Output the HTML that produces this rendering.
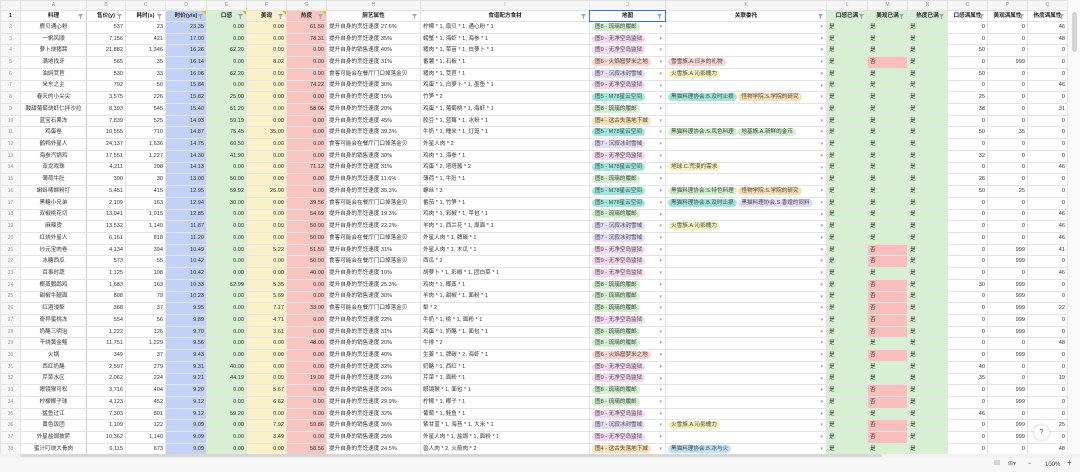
<!DOCTYPE html><html><head><meta charset="utf-8"><style>
*{margin:0;padding:0;box-sizing:border-box}
body{width:1080px;height:472px;overflow:hidden;background:#fff;font-family:"Liberation Sans","Noto Sans CJK SC",sans-serif;font-size:5.6px;color:#333;position:relative}
table{border-collapse:collapse;table-layout:fixed;position:absolute;left:0;top:0;width:1067px}
td{border:1px solid #e4e4e4;height:11.72px;padding:0 2px;white-space:nowrap;overflow:hidden;text-align:right;line-height:9px;position:relative}
tr.h td{height:10px;background:#f5f5f5;color:#999;text-align:center;font-size:5px;border-color:#e2e2e2}
tr.f td{height:11px;font-weight:bold;text-align:center;color:#222}
td:nth-child(1){background:#f7f7f7;color:#999;text-align:center;font-size:5px}
td:nth-child(2){text-align:center;border-right:1px solid #ccc}
td:nth-child(9),td:nth-child(10),td:nth-child(11),td:nth-child(12),td:nth-child(13),td:nth-child(14),td:nth-child(15){text-align:left}
td:nth-child(5){background:#c3d1f7}td:nth-child(6){background:#d7f0d2}td:nth-child(7){background:#fbf1c8}td:nth-child(8){background:#f8c5c1}
td:nth-child(13),td:nth-child(14),td:nth-child(15){background:#d7f0d2}
td.n{background:#f8bfbd!important}
tr.h td:nth-child(n){background:#f5f5f5}
tr.f td:nth-child(n+5):nth-child(-n+8)::before{content:"";position:absolute;right:0;top:0;border-top:4px solid #f2c200;border-left:4px solid transparent}
.fi{position:absolute;right:3px;top:3px;width:5px;height:5px;background:#9aa6c8;clip-path:polygon(0 0,100% 0,62% 50%,62% 100%,38% 100%,38% 50%)}
span{display:inline-block;border-radius:4px;padding:0 3px;line-height:8px;color:#444}
.g{background:#d3f0d0}.p{background:#f6d8f2}.r{background:#fbd5d2}.l{background:#e6def8}.t{background:#9fe8e0}.o{background:#fbdfb5}.y{background:#f5f3c0}.b{background:#bfe3fb}
.dd::after{content:"▾";position:absolute;right:3px;top:1px;color:#999;font-size:5px}
#sel{position:absolute;left:589px;top:10px;width:77px;height:12px;border:1.5px solid #3b6fd8}
#vs{position:absolute;left:1067px;top:0;width:13px;height:454px;background:#fafafa;border-left:1px solid #e6e6e6}
#vs div{position:absolute;left:4px;top:12px;width:5px;height:40px;background:#d4d4d4;border-radius:3px}
#hs{position:absolute;left:0;top:454px;width:1080px;height:4px;background:#f2f2f2}
#hs div{position:absolute;left:20px;top:0;width:862px;height:3px;background:#d6d6d6;border-radius:2px}
#ft{position:absolute;left:0;top:458px;width:1080px;height:14px;background:#f7f7f7;color:#666;font-size:6px}
#help{position:absolute;left:1034px;top:425px;width:15px;height:15px;border-radius:50%;background:#fff;box-shadow:0 0 3px #bbb;text-align:center;line-height:15px;font-size:7px;color:#555}
</style></head><body>
<table>
<colgroup><col style="width:20px"><col style="width:66px"><col style="width:39px"><col style="width:40px"><col style="width:41px"><col style="width:40px"><col style="width:40px"><col style="width:40px"><col style="width:94px"><col style="width:169px"><col style="width:76px"><col style="width:161px"><col style="width:41px"><col style="width:40px"><col style="width:40px"><col style="width:40px"><col style="width:40px"><col style="width:40px"></colgroup>
<tr class="h"><td></td><td>A</td><td>B</td><td>C</td><td>D</td><td>E</td><td>F</td><td>G</td><td>H</td><td>I</td><td>J</td><td>K</td><td>L</td><td>M</td><td>N</td><td>O</td><td>P</td><td>Q</td></tr>
<tr class="f"><td>1</td><td>料理<i class="fi"></i></td><td>售价(y)<i class="fi"></i></td><td>耗时(s)<i class="fi"></i></td><td>时价(y/s)<i class="fi"></i></td><td>口感<i class="fi"></i></td><td>美观<i class="fi"></i></td><td>热度<i class="fi"></i></td><td>厨艺属性<i class="fi"></i></td><td>食谱配方食材<i class="fi"></i></td><td>地图<i class="fi"></i></td><td>关联委托<i class="fi"></i></td><td>口感已满<i class="fi"></i></td><td>美观已满<i class="fi"></i></td><td>热度已满<i class="fi"></i></td><td>口感满属性<i class="fi"></i></td><td>美观满属性<i class="fi"></i></td><td>热度满属性<i class="fi"></i></td></tr>
<tr><td>2</td><td>鹿贝通心粉</td><td>537</td><td>23</td><td>23.35</td><td>0.00</td><td>0.00</td><td>61.50</td><td>提升自身的烹饪速度 27.6%</td><td>柠檬 * 1, 扇贝 * 1, 通心粉 * 1</td><td class="dd"><span class="g">图8 - 琉璃的履邮</span></td><td class="dd"></td><td>是</td><td>是</td><td>是</td><td>0</td><td>0</td><td>46</td></tr>
<tr><td>3</td><td>一帆风顺</td><td>7,156</td><td>421</td><td>17.00</td><td>0.00</td><td>0.00</td><td>78.31</td><td>提升自身的烹饪速度 35%</td><td>螃蟹 * 1, 海虾 * 1, 海参 * 1</td><td class="dd"><span class="p">图9 - 无净空岛监狱</span></td><td class="dd"></td><td>是</td><td>是</td><td>是</td><td>0</td><td>0</td><td>48</td></tr>
<tr><td>4</td><td>萝卜烧猪蹄</td><td>21,882</td><td>1,346</td><td>16.26</td><td>62.20</td><td>0.00</td><td>0.00</td><td>提升自身的销售速度 40%</td><td>猪肉 * 1, 菜苗 * 1, 白萝卜 * 1</td><td class="dd"><span class="p">图9 - 无净空岛监狱</span></td><td class="dd"></td><td>是</td><td>是</td><td>是</td><td>50</td><td>0</td><td>0</td></tr>
<tr><td>5</td><td>满地找牙</td><td>565</td><td>35</td><td>16.14</td><td>0.00</td><td>8.02</td><td>0.00</td><td>提升自身的烹饪速度 31%</td><td>番薯 * 1, 石板 * 1</td><td class="dd"><span class="r">图6 - 火焰窟梦米之地</span></td><td class="dd"><span class="r">雪雪族.A.日乡的礼物</span></td><td>是</td><td class="n">否</td><td>是</td><td>0</td><td>999</td><td>0</td></tr>
<tr><td>6</td><td>油焖茭苣</td><td>530</td><td>33</td><td>16.06</td><td>62.20</td><td>0.00</td><td>0.00</td><td>食客可能会在餐厅门口掉落金贝</td><td>猪肉 * 1, 茭苣 * 1</td><td class="dd"><span class="l">图7 - 沉寂冰封雪域</span></td><td class="dd"><span class="y">火雪族.A.沁影魄力</span></td><td>是</td><td>是</td><td>是</td><td>50</td><td>0</td><td>0</td></tr>
<tr><td>7</td><td>米东之主</td><td>792</td><td>50</td><td>15.84</td><td>0.00</td><td>0.00</td><td>74.22</td><td>提升自身的烹饪速度 30%</td><td>鸡蛋 * 1, 白萝卜 * 1, 墨鱼 * 1</td><td class="dd"><span class="p">图9 - 无净空岛监狱</span></td><td class="dd"></td><td>是</td><td>是</td><td>是</td><td>0</td><td>0</td><td>46</td></tr>
<tr><td>8</td><td>春天的小尖尖</td><td>3,575</td><td>226</td><td>15.82</td><td>25.00</td><td>0.00</td><td>0.00</td><td>提升自身的烹饪速度 15%</td><td>竹笋 * 2</td><td class="dd"><span class="t">图5 - M78星云空间</span></td><td class="dd"><span class="t">黑猫料理协会.B.及时止损</span> <span class="o">怪物学院.S.学院的研究</span></td><td>是</td><td>是</td><td>是</td><td>25</td><td>0</td><td>0</td></tr>
<tr><td>9</td><td>酸甜葡萄烧虾仁拌沙拉</td><td>8,393</td><td>545</td><td>15.40</td><td>51.20</td><td>0.00</td><td>58.06</td><td>提升自身的烹饪速度 20%</td><td>鸡蛋 * 1, 葡萄桃 * 1, 海虾 * 1</td><td class="dd"><span class="g">图8 - 琉璃的履邮</span></td><td class="dd"></td><td>是</td><td>是</td><td>是</td><td>38</td><td>0</td><td>31</td></tr>
<tr><td>10</td><td>蓝宝石果冻</td><td>7,839</td><td>525</td><td>14.93</td><td>59.19</td><td>0.00</td><td>0.00</td><td>提升自身的烹饪速度 45%</td><td>胶豆 * 1, 蓝莓 * 1, 冰粉 * 1</td><td class="dd"><span class="o">图4 - 远古失落地下城</span></td><td class="dd"></td><td>是</td><td>是</td><td>是</td><td>0</td><td>0</td><td>0</td></tr>
<tr><td>11</td><td>鸡蛋卷</td><td>10,555</td><td>710</td><td>14.87</td><td>75.45</td><td>35.00</td><td>0.00</td><td>提升自身的烹饪速度 39.3%</td><td>牛奶 * 1, 糯米 * 1, 灯笼 * 1</td><td class="dd"><span class="t">图5 - M78星云空间</span></td><td class="dd"><span class="g">黑猫料理协会.S.风色料理</span> <span class="g">地基族.A.新鲜的金币</span></td><td>是</td><td>是</td><td>是</td><td>50</td><td>35</td><td>0</td></tr>
<tr><td>12</td><td>鹤鸭外星人</td><td>24,137</td><td>1,636</td><td>14.75</td><td>60.50</td><td>0.00</td><td>0.00</td><td>食客可能会在餐厅门口掉落金贝</td><td>外星人肉 * 2</td><td class="dd"><span class="l">图7 - 沉寂冰封雪域</span></td><td class="dd"></td><td>是</td><td>是</td><td>是</td><td>0</td><td>0</td><td>0</td></tr>
<tr><td>13</td><td>海参汽锅鸡</td><td>17,551</td><td>1,227</td><td>14.30</td><td>41.90</td><td>0.00</td><td>0.00</td><td>提升自身的销售速度 30%</td><td>鸡肉 * 1, 海参 * 1</td><td class="dd"><span class="p">图9 - 无净空岛监狱</span></td><td class="dd"></td><td>是</td><td>是</td><td>是</td><td>32</td><td>0</td><td>0</td></tr>
<tr><td>14</td><td>双龙戏珠</td><td>4,211</td><td>298</td><td>14.13</td><td>0.00</td><td>0.00</td><td>71.12</td><td>提升自身的烹饪速度 31%</td><td>鸡蛋 * 2, 塔塔酱 * 2</td><td class="dd"><span class="t">图5 - M78星云空间</span></td><td class="dd"><span class="y">地球.C.荒漠的需求</span></td><td>是</td><td>是</td><td>是</td><td>0</td><td>0</td><td>46</td></tr>
<tr><td>15</td><td>薄荷牛肚</td><td>390</td><td>30</td><td>13.00</td><td>50.00</td><td>0.00</td><td>0.00</td><td>提升自身的烹饪速度 11.6%</td><td>薄荷 * 1, 牛肚 * 1</td><td class="dd"><span class="g">图8 - 琉璃的履邮</span></td><td class="dd"></td><td>是</td><td>是</td><td>是</td><td>26</td><td>0</td><td>0</td></tr>
<tr><td>16</td><td>蝌蚪嗦蛳粉打</td><td>5,451</td><td>415</td><td>12.95</td><td>59.92</td><td>25.00</td><td>0.00</td><td>提升自身的烹饪速度 35.3%</td><td>螺丝 * 3</td><td class="dd"><span class="t">图5 - M78星云空间</span></td><td class="dd"><span class="g">黑猫料理协会.S.特色料理</span> <span class="o">怪物学院.S.学院的研究</span></td><td>是</td><td>是</td><td>是</td><td>50</td><td>25</td><td>0</td></tr>
<tr><td>17</td><td>黑糖小兄弟</td><td>2,109</td><td>163</td><td>12.94</td><td>30.00</td><td>0.00</td><td>39.56</td><td>食客可能会在餐厅门口掉落金贝</td><td>番茄 * 1, 竹笋 * 1</td><td class="dd"><span class="t">图5 - M78星云空间</span></td><td class="dd"><span class="t">黑猫料理协会.B.及时止损</span> <span class="l">黑猫料理协会.S.香煌的同料</span></td><td>是</td><td>是</td><td>是</td><td>0</td><td>0</td><td>0</td></tr>
<tr><td>18</td><td>双椒桃花切</td><td>13,041</td><td>1,015</td><td>12.85</td><td>0.00</td><td>0.00</td><td>54.69</td><td>提升自身的烹饪速度 19.3%</td><td>鸡肉 * 1, 彩椒 * 1, 苹包 * 1</td><td class="dd"><span class="g">图8 - 琉璃的履邮</span></td><td class="dd"></td><td>是</td><td>是</td><td>是</td><td>0</td><td>0</td><td>46</td></tr>
<tr><td>19</td><td>麻辣烫</td><td>13,532</td><td>1,140</td><td>11.87</td><td>0.00</td><td>0.00</td><td>50.00</td><td>提升自身的烹饪速度 22.2%</td><td>羊肉 * 1, 西兰花 * 1, 周面 * 1</td><td class="dd"><span class="l">图7 - 沉寂冰封雪域</span></td><td class="dd"><span class="y">火雪族.A.沁影魄力</span></td><td>是</td><td>是</td><td>是</td><td>0</td><td>0</td><td>46</td></tr>
<tr><td>20</td><td>红烧外星人</td><td>6,161</td><td>818</td><td>11.20</td><td>0.00</td><td>0.00</td><td>50.00</td><td>食客可能会在餐厅门口掉落金贝</td><td>外星人肉 * 1, 牌碳 * 1</td><td class="dd"><span class="l">图7 - 沉寂冰封雪域</span></td><td class="dd"></td><td>是</td><td>是</td><td>是</td><td>0</td><td>0</td><td>46</td></tr>
<tr><td>21</td><td>炒元宝肉卷</td><td>4,134</td><td>394</td><td>10.49</td><td>0.00</td><td>5.22</td><td>51.50</td><td>提升自身的烹饪速度 31%</td><td>外星人肉 * 1, 木瓜 * 1</td><td class="dd"><span class="p">图9 - 无净空岛监狱</span></td><td class="dd"></td><td>是</td><td class="n">否</td><td>是</td><td>0</td><td>999</td><td>41</td></tr>
<tr><td>22</td><td>冰糖西瓜</td><td>573</td><td>55</td><td>10.42</td><td>0.00</td><td>0.00</td><td>50.00</td><td>食客可能会在餐厅门口掉落金贝</td><td>西瓜 * 2</td><td class="dd"><span class="p">图9 - 无净空岛监狱</span></td><td class="dd"></td><td>是</td><td class="n">否</td><td>是</td><td>0</td><td>999</td><td>0</td></tr>
<tr><td>23</td><td>百事时蔬</td><td>1,125</td><td>108</td><td>10.42</td><td>0.00</td><td>0.00</td><td>40.00</td><td>提升自身的烹饪速度 10%</td><td>胡萝卜 * 1, 彩椒 * 1, 团白菜 * 1</td><td class="dd"><span class="p">图9 - 无净空岛监狱</span></td><td class="dd"></td><td>是</td><td>是</td><td>是</td><td>0</td><td>0</td><td>46</td></tr>
<tr><td>24</td><td>椰蒸鹦鹉鸡</td><td>1,683</td><td>163</td><td>10.33</td><td>52.99</td><td>5.35</td><td>0.00</td><td>提升自身的烹饪速度 25.3%</td><td>鸡肉 * 1, 椰蒸 * 1</td><td class="dd"><span class="g">图8 - 琉璃的履邮</span></td><td class="dd"></td><td>是</td><td class="n">否</td><td>是</td><td>30</td><td>999</td><td>0</td></tr>
<tr><td>25</td><td>甜椒牛腿面</td><td>808</td><td>79</td><td>10.23</td><td>0.00</td><td>5.69</td><td>0.00</td><td>提升自身的销售速度 30%</td><td>羊肉 * 1, 甜椒 * 1, 面粉 * 1</td><td class="dd"><span class="g">图8 - 琉璃的履邮</span></td><td class="dd"></td><td>是</td><td class="n">否</td><td>是</td><td>0</td><td>999</td><td>0</td></tr>
<tr><td>26</td><td>红酒浸梨</td><td>368</td><td>37</td><td>9.95</td><td>0.00</td><td>7.17</td><td>33.00</td><td>食客可能会在餐厅门口掉落金贝</td><td>梨 * 2</td><td class="dd"><span class="g">图8 - 琉璃的履邮</span></td><td class="dd"></td><td>是</td><td class="n">否</td><td>是</td><td>0</td><td>999</td><td>22</td></tr>
<tr><td>27</td><td>奇异蜜桃冻</td><td>554</td><td>56</td><td>9.89</td><td>0.00</td><td>4.71</td><td>0.00</td><td>提升自身的烹饪速度 22%</td><td>牛奶 * 1, 桃 * 1, 面粉 * 1</td><td class="dd"><span class="p">图9 - 无净空岛监狱</span></td><td class="dd"></td><td>是</td><td class="n">否</td><td>是</td><td>0</td><td>999</td><td>0</td></tr>
<tr><td>28</td><td>奶酪三明治</td><td>1,222</td><td>126</td><td>9.70</td><td>0.00</td><td>3.61</td><td>0.00</td><td>提升自身的烹饪速度 31%</td><td>鸡蛋 * 1, 奶酪 * 1, 面包 * 1</td><td class="dd"><span class="g">图8 - 琉璃的履邮</span></td><td class="dd"></td><td>是</td><td class="n">否</td><td>是</td><td>0</td><td>999</td><td>0</td></tr>
<tr><td>29</td><td>干烧黄金鳐</td><td>11,751</td><td>1,229</td><td>9.56</td><td>0.00</td><td>0.00</td><td>48.00</td><td>提升自身的销售速度 20%</td><td>牛排 * 2</td><td class="dd"><span class="g">图8 - 琉璃的履邮</span></td><td class="dd"></td><td>是</td><td>是</td><td>是</td><td>0</td><td>0</td><td>48</td></tr>
<tr><td>30</td><td>火锅</td><td>349</td><td>37</td><td>9.43</td><td>0.00</td><td>0.00</td><td>0.00</td><td>提升自身的烹饪速度 40%</td><td>生姜 * 1, 牌碳 * 2, 海虾 * 1</td><td class="dd"><span class="r">图6 - 火焰窟梦米之地</span></td><td class="dd"></td><td>是</td><td class="n">否</td><td>是</td><td>0</td><td>999</td><td>0</td></tr>
<tr><td>31</td><td>西红奶酪</td><td>2,597</td><td>279</td><td>9.31</td><td>40.00</td><td>0.00</td><td>0.00</td><td>提升自身的烹饪速度 32%</td><td>奶酪 * 1, 西红 * 1</td><td class="dd"><span class="p">图9 - 无净空岛监狱</span></td><td class="dd"></td><td>是</td><td>是</td><td>是</td><td>40</td><td>0</td><td>0</td></tr>
<tr><td>32</td><td>芹菜水区</td><td>2,062</td><td>224</td><td>9.21</td><td>44.19</td><td>0.00</td><td>19.00</td><td>提升自身的烹饪速度 23%</td><td>芹菜 * 1, 面粉 * 1</td><td class="dd"><span class="p">图9 - 无净空岛监狱</span></td><td class="dd"></td><td>是</td><td>是</td><td>是</td><td>35</td><td>0</td><td>19</td></tr>
<tr><td>33</td><td>眼镜猴可松</td><td>3,716</td><td>404</td><td>9.20</td><td>0.00</td><td>5.67</td><td>0.00</td><td>提升自身的销售速度 26%</td><td>眼镜猴 * 1, 面包 * 1</td><td class="dd"><span class="g">图8 - 琉璃的履邮</span></td><td class="dd"></td><td>是</td><td class="n">否</td><td>是</td><td>0</td><td>999</td><td>0</td></tr>
<tr><td>34</td><td>柠檬椰子球</td><td>4,123</td><td>452</td><td>9.12</td><td>0.00</td><td>6.62</td><td>0.00</td><td>提升自身的烹饪速度 29.9%</td><td>柠檬 * 1, 椰子 * 1</td><td class="dd"><span class="g">图8 - 琉璃的履邮</span></td><td class="dd"></td><td>是</td><td class="n">否</td><td>是</td><td>0</td><td>999</td><td>0</td></tr>
<tr><td>35</td><td>猛鱼过江</td><td>7,303</td><td>801</td><td>9.12</td><td>59.20</td><td>0.00</td><td>0.00</td><td>提升自身的烹饪速度 32%</td><td>葡萄 * 1, 鲑鱼 * 1</td><td class="dd"><span class="p">图9 - 无净空岛监狱</span></td><td class="dd"></td><td>是</td><td>是</td><td>是</td><td>46</td><td>0</td><td>0</td></tr>
<tr><td>36</td><td>黄色饭团</td><td>1,109</td><td>122</td><td>9.09</td><td>0.00</td><td>7.92</td><td>59.86</td><td>提升自身的销售速度 36%</td><td>紫甘蓝 * 1, 海苔 * 1, 大米 * 1</td><td class="dd"><span class="l">图7 - 沉寂冰封雪域</span></td><td class="dd"><span class="y">火雪族.A.沁影魄力</span></td><td>是</td><td class="n">否</td><td>是</td><td>0</td><td>999</td><td>25</td></tr>
<tr><td>37</td><td>外星盐焗披萨</td><td>10,362</td><td>1,140</td><td>9.09</td><td>0.00</td><td>3.49</td><td>0.00</td><td>提升自身的销售速度 25%</td><td>外星人肉 * 1, 盐焗 * 1, 面粉 * 1</td><td class="dd"><span class="p">图9 - 无净空岛监狱</span></td><td class="dd"></td><td>是</td><td class="n">否</td><td>是</td><td>0</td><td>999</td><td>0</td></tr>
<tr><td>38</td><td>蜜汁叮烧大骨肉</td><td>6,115</td><td>673</td><td>9.09</td><td>0.00</td><td>0.00</td><td>58.56</td><td>提升自身的烹饪速度 24.5%</td><td>兽人肉 * 2, 火箭肉 * 2</td><td class="dd"><span class="o">图4 - 远古失落地下城</span></td><td class="dd"><span class="b">黑猫料理协会.B.冰与火</span></td><td>是</td><td>是</td><td>是</td><td>0</td><td>0</td><td>48</td></tr>
</table>
<div id="sel"></div>
<div id="vs"><div></div></div>
<div id="hs"><div></div></div>
<div id="help">?</div>
<div id="ft"><span style="position:absolute;left:991px;top:2px;color:#777">▤</span><span style="position:absolute;left:1005px;top:2px;color:#777">⊞▾</span><span style="position:absolute;left:1025px;top:2px">−</span><span style="position:absolute;left:1042px;top:3px">100%</span><span style="position:absolute;left:1064px;top:1px;font-size:8px">+</span></div>
</body></html>
